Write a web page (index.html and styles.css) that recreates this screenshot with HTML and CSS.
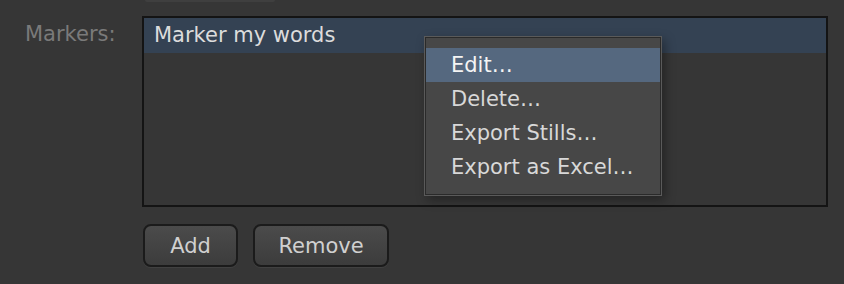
FILE: index.html
```html
<!DOCTYPE html>
<html lang="en">
<head>
    <meta charset="UTF-8">
    <title>Markers</title>
    <link rel="stylesheet" href="styles.css">
</head>
<body>
    <div class="panel">
        <div class="stub"></div>

        <div class="field">
            <label class="field-label">Markers:</label>
            <div class="list">
                <div class="list-row selected">Marker my words</div>

                <!-- context menu over the list -->
                <ul class="menu">
                    <li class="menu-item active">Edit…</li>
                    <li class="menu-item">Delete…</li>
                    <li class="menu-item">Export Stills…</li>
                    <li class="menu-item">Export as Excel…</li>
                </ul>
            </div>
        </div>

        <div class="actions">
            <button class="btn btn-add">Add</button>
            <button class="btn btn-remove">Remove</button>
        </div>
    </div>
</body>
</html>
```

FILE: styles.css
```css
body {
    margin: 0;
    background-color: #363636;
    font-family: "DejaVu Sans", "Liberation Sans", sans-serif;
    font-size: 21px;
    color: #dcdcdc;
    overflow: hidden;
}
.panel {
    width: 844px;
    height: 284px;
}
.stub {
    margin-left: 145px;
    width: 130px;
    height: 2px;
    background-color: #3f3f3f;
    border-radius: 0 0 4px 4px;
}
.field {
    display: flex;
    margin-top: 14px;
}
.field-label {
    width: 117px;
    padding-left: 25px;
    padding-top: 6px;
    color: #7a7a7a;
}
.list {
    position: relative;
    width: 682px;
    height: 187px;
    border: 2px solid #141414;
    background-color: #363636;
}
.list-row {
    height: 35px;
    line-height: 35px;
    padding-left: 10px;
}
.list-row.selected {
    background-color: #344253;
}
.menu {
    position: absolute;
    left: 280px;
    top: 18px;
    width: 236px;
    margin: 0;
    padding: 11px 0;
    list-style: none;
    background-color: #474747;
    border: 1px solid #5a5a5a;
    box-shadow: inset 0 0 0 1px #2a2a2a, 3px 4px 10px rgba(0, 0, 0, 0.35);
}
.menu-item {
    height: 34px;
    line-height: 34px;
    margin: 0 1px;
    padding-left: 25px;
    color: #d8d8d8;
}
.menu-item.active {
    background-color: #55687f;
    color: #f4f4f4;
}
.actions {
    display: flex;
    gap: 15px;
    margin-top: 17px;
    margin-left: 143px;
}
.btn {
    height: 43px;
    padding: 0;
    border: 2px solid #1b1b1b;
    border-radius: 8px;
    background: linear-gradient(#4b4b4b, #3c3c3c);
    color: #d0d0d0;
    font-family: inherit;
    font-size: 21px;
    box-shadow: 0 1px 0 rgba(255, 255, 255, 0.06);
}
.btn-add {
    width: 95px;
}
.btn-remove {
    width: 136px;
}
```
